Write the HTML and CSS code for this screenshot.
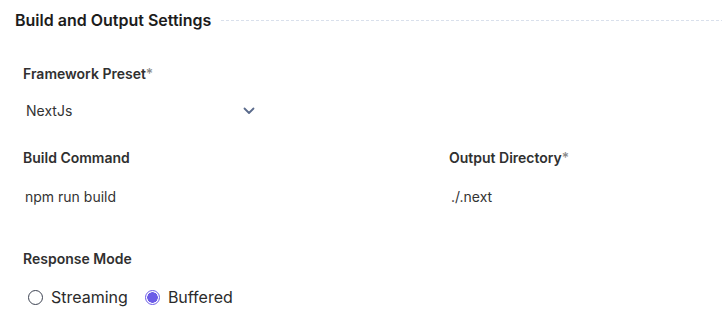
FILE: index.html
```html
<!DOCTYPE html>
<html>
<head>
<meta charset="utf-8">
<link rel="stylesheet" href="styles.css">
</head>
<body>
<div class="page">
  <div class="section-head">
    <h2 class="section-title">Build and Output Settings</h2>
    <div class="rule"></div>
  </div>
  <div class="body">
    <div class="field field-preset">
      <div class="label">Framework Preset<span class="req">*</span></div>
      <div class="select">
        <span class="value">NextJs</span>
        <svg class="chev" width="12" height="8" viewBox="0 0 12 8"><path d="M1.5 1.5 L6 6 L10.5 1.5" fill="none" stroke="#5b6b8c" stroke-width="1.8" stroke-linecap="round" stroke-linejoin="round"/></svg>
      </div>
    </div>
    <div class="grid">
      <div class="field">
        <div class="label">Build Command</div>
        <div class="input">npm run build</div>
      </div>
      <div class="field">
        <div class="label">Output Directory<span class="req">*</span></div>
        <div class="input">./.next</div>
      </div>
    </div>
    <div class="field field-mode">
      <div class="label">Response Mode</div>
      <div class="radios">
        <label class="radio"><span class="dot"></span>Streaming</label>
        <label class="radio checked"><span class="dot"></span>Buffered</label>
      </div>
    </div>
  </div>
</div>
</body>
</html>
```
FILE: styles.css
```css
* { box-sizing: border-box; }
html, body { margin: 0; padding: 0; background: #fff; }
body { font-family: Inter, "Noto Sans", sans-serif; color: #2b2b2b; }
.page { padding: 10px 0 0 15px; }
.section-head { display: flex; align-items: center; gap: 10px; height: 20px; }
.section-title { margin: 0; font-size: 16px; line-height: 20px; font-weight: 600; color: #1c1c1c; white-space: nowrap; }
.rule { flex: 1; height: 1px; margin-top: 1px; background: repeating-linear-gradient(90deg, #d9e0ec 0 3px, transparent 3px 5px); }
.body { padding-left: 8px; }
.label { font-size: 14px; line-height: 18px; font-weight: 600; color: #303030; }
.req { color: #8a8a8a; font-weight: 500; }
.field-preset { margin-top: 35px; }
.select { display: flex; align-items: center; justify-content: space-between; width: 232px; height: 20px; margin-top: 18px; padding-left: 3px; }
.value, .input { font-size: 14px; line-height: 18px; color: #333; }
.chev { display: block; margin-top: 0; }
.grid { display: grid; grid-template-columns: 426px 1fr; margin-top: 28px; }
.input { margin-top: 21px; padding-left: 2px; }
.field-mode { margin-top: 44px; }
.radios { display: flex; gap: 17px; margin-top: 19px; padding-left: 5px; }
.radio { display: flex; align-items: center; gap: 8px; font-size: 16px; line-height: 20px; color: #2b2b2b; }
.dot { width: 15px; height: 15px; border-radius: 50%; border: 1.3px solid #3d4352; display: inline-block; flex: none; }
.radio.checked .dot { border-color: #6c5ce7; background: radial-gradient(circle, #6c5ce7 0 5px, #fff 5.5px); }
```
